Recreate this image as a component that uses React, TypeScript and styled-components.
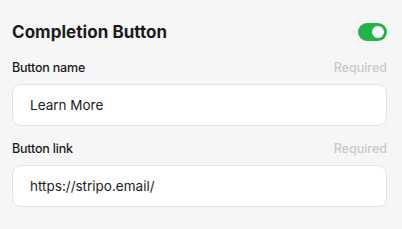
import styled, { createGlobalStyle } from "styled-components";

const Global = createGlobalStyle`
  html, body {
    margin: 0;
    padding: 0;
    background: #f6f6f6;
  }
  body {
    font-family: Inter, "Noto Sans", sans-serif;
    color: #1b1b1f;
  }
`;

const Panel = styled.section`
  width: 402px;
  height: 229px;
  box-sizing: border-box;
  padding: 19px 15px 0 12px;
  background: #f6f6f6;
`;

const Header = styled.div`
  display: flex;
  justify-content: space-between;
  align-items: center;
  height: 26px;
  margin-bottom: 14px;
`;

const Title = styled.h2`
  margin: 0;
  font-size: 17px;
  font-weight: 700;
  letter-spacing: 0.05px;
`;

const Toggle = styled.button<{ $on: boolean }>`
  position: relative;
  width: 29px;
  height: 18px;
  border: none;
  padding: 0;
  border-radius: 9px;
  background: ${(p) => (p.$on ? "#21b24b" : "#cfcfcf")};

  &::after {
    content: "";
    position: absolute;
    top: 3px;
    left: ${(p) => (p.$on ? "14px" : "3px")};
    width: 12px;
    height: 12px;
    border-radius: 50%;
    background: #ffffff;
  }
`;

const Field = styled.div`
  margin-bottom: 14px;
`;

const LabelRow = styled.div`
  display: flex;
  justify-content: space-between;
  align-items: center;
  height: 16px;
  margin-bottom: 9px;
`;

const Label = styled.label`
  font-size: 12.5px;
  font-weight: 500;
  letter-spacing: -0.2px;
`;

const Hint = styled.span`
  font-size: 12.5px;
  font-weight: 500;
  color: #c9c9cb;
`;

const Input = styled.input`
  display: block;
  width: 100%;
  height: 42px;
  box-sizing: border-box;
  padding: 0 17px;
  border: 1px solid #e4e4e6;
  border-radius: 9px;
  background: #ffffff;
  font-family: Inter, "Noto Sans", sans-serif;
  font-size: 13.5px;
  color: #1b1b1f;
  outline: none;
`;

const App = () => {
  return (
    <Panel>
      <Global />
      <Header>
        <Title>Completion Button</Title>
        <Toggle $on aria-label="Enable completion button" />
      </Header>

      <Field>
        <LabelRow>
          <Label>Button name</Label>
          <Hint>Required</Hint>
        </LabelRow>
        <Input defaultValue="Learn More" />
      </Field>

      <Field>
        <LabelRow>
          <Label>Button link</Label>
          <Hint>Required</Hint>
        </LabelRow>
        <Input defaultValue="https://stripo.email/" />
      </Field>
    </Panel>
  );
};

export default App;
